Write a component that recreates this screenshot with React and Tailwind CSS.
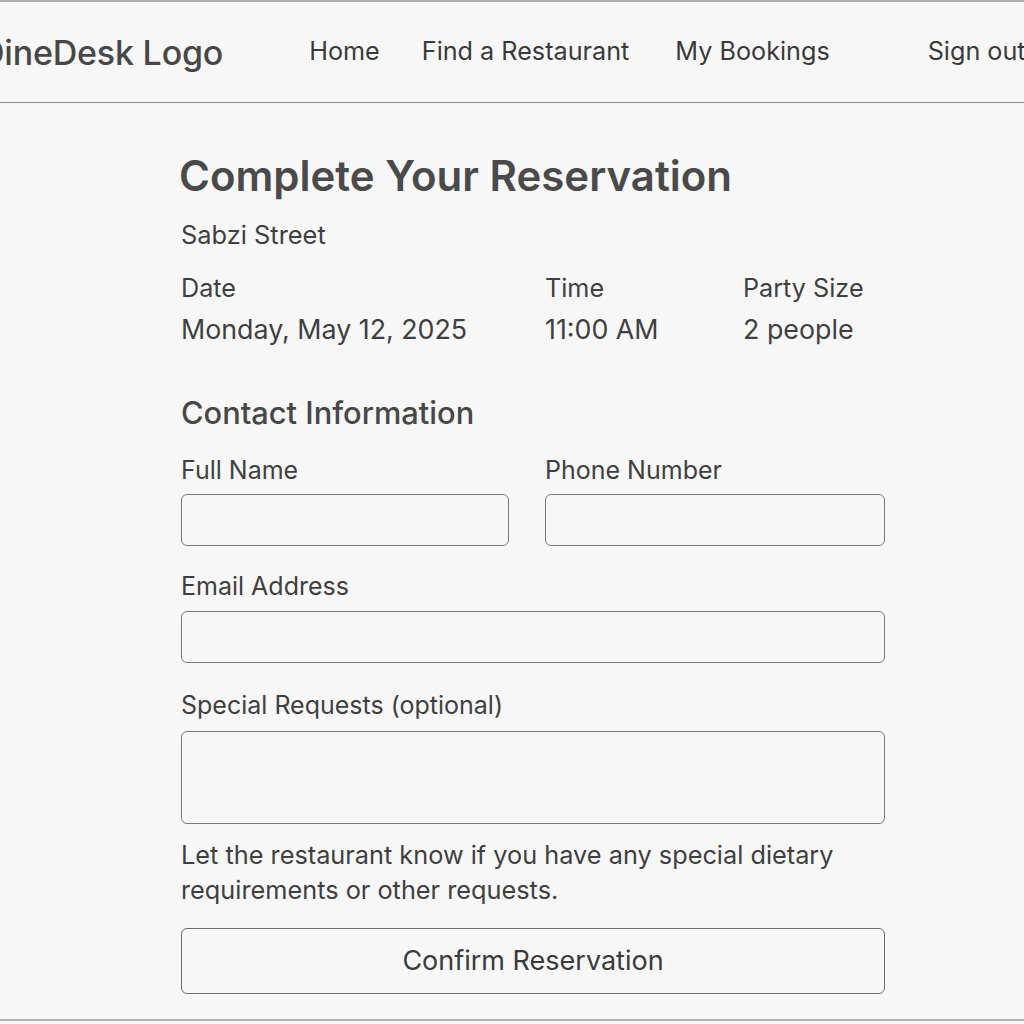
const FONT = "font-['Inter','Noto_Sans',sans-serif]";

function Field({ label, className = '', height = 'h-[52px]', gap = 'mt-[9px]', multiline }) {
  return (
    <div className={className}>
      <label className="block text-[25px] leading-[30px] text-[#3f3f3f]">{label}</label>
      {multiline ? (
        <textarea
          className={`${gap} block w-full ${height} resize-none rounded-[6px] border border-[#7a7a7a] bg-[#f7f7f7]`}
        />
      ) : (
        <input
          type="text"
          className={`${gap} block w-full ${height} rounded-[6px] border border-[#7a7a7a] bg-[#f7f7f7]`}
        />
      )}
    </div>
  );
}

export default function App() {
  return (
    <div className={`${FONT} h-[1024px] overflow-hidden bg-[#f7f7f7] text-[#3f3f3f]`}>
      <header className="flex h-[103px] items-center whitespace-nowrap border-t-2 border-b border-t-[#b0b0b0] border-b-[#8a8a8a]">
        <div className="ml-[-20px] text-[34px] font-medium tracking-[-0.2px] text-[#474747]">
          DineDesk Logo
        </div>
        <nav className="ml-[86px] flex text-[25.2px] text-[#3a3a3a]">
          <span>Home</span>
          <span className="ml-[42px]">Find a Restaurant</span>
          <span className="ml-[46px]">My Bookings</span>
        </nav>
        <span className="ml-[98px] text-[25.2px] text-[#3a3a3a]">Sign out</span>
      </header>

      <main className="ml-[181px] w-[704px] pb-[25px]">
        <h1 className="mt-[48px] ml-[-2px] text-[42px] font-semibold leading-[50px] text-[#4a4a4a]">
          Complete Your Reservation
        </h1>
        <p className="mt-[19px] text-[25.4px] leading-[30px]">Sabzi Street</p>

        <div className="mt-[23px] grid grid-cols-[364px_198px_1fr]">
          {[
            ['Date', 'Monday, May 12, 2025'],
            ['Time', '11:00 AM'],
            ['Party Size', '2 people'],
          ].map(([label, value]) => (
            <div key={label}>
              <div className="text-[25.2px] leading-[30px]">{label}</div>
              <div className="mt-[9px] text-[26.8px] leading-[34px]">{value}</div>
            </div>
          ))}
        </div>

        <h2 className="mt-[49px] text-[30.8px] font-medium leading-[36px] text-[#474747]">
          Contact Information
        </h2>

        <div className="mt-[24px] grid grid-cols-[328px_1fr] gap-x-[36px]">
          <Field label="Full Name" />
          <Field label="Phone Number" />
        </div>

        <Field label="Email Address" className="mt-[25px]" gap="mt-[10px]" />
        <Field
          label="Special Requests (optional)"
          className="mt-[27px]"
          gap="mt-[11px]"
          height="h-[93px]"
          multiline
        />

        <p className="mt-[13px] text-[25.3px] leading-[35px]">
          Let the restaurant know if you have any special dietary
          <br />
          requirements or other requests.
        </p>

        <button
          type="button"
          className="mt-[21px] flex h-[66px] w-full items-center justify-center rounded-[6px] border border-[#6e6e6e] text-[27px] text-[#3a3a3a]"
        >
          Confirm Reservation
        </button>
      </main>
      <div className="border-t-2 border-t-[#b4b4b4]" />
    </div>
  );
}
